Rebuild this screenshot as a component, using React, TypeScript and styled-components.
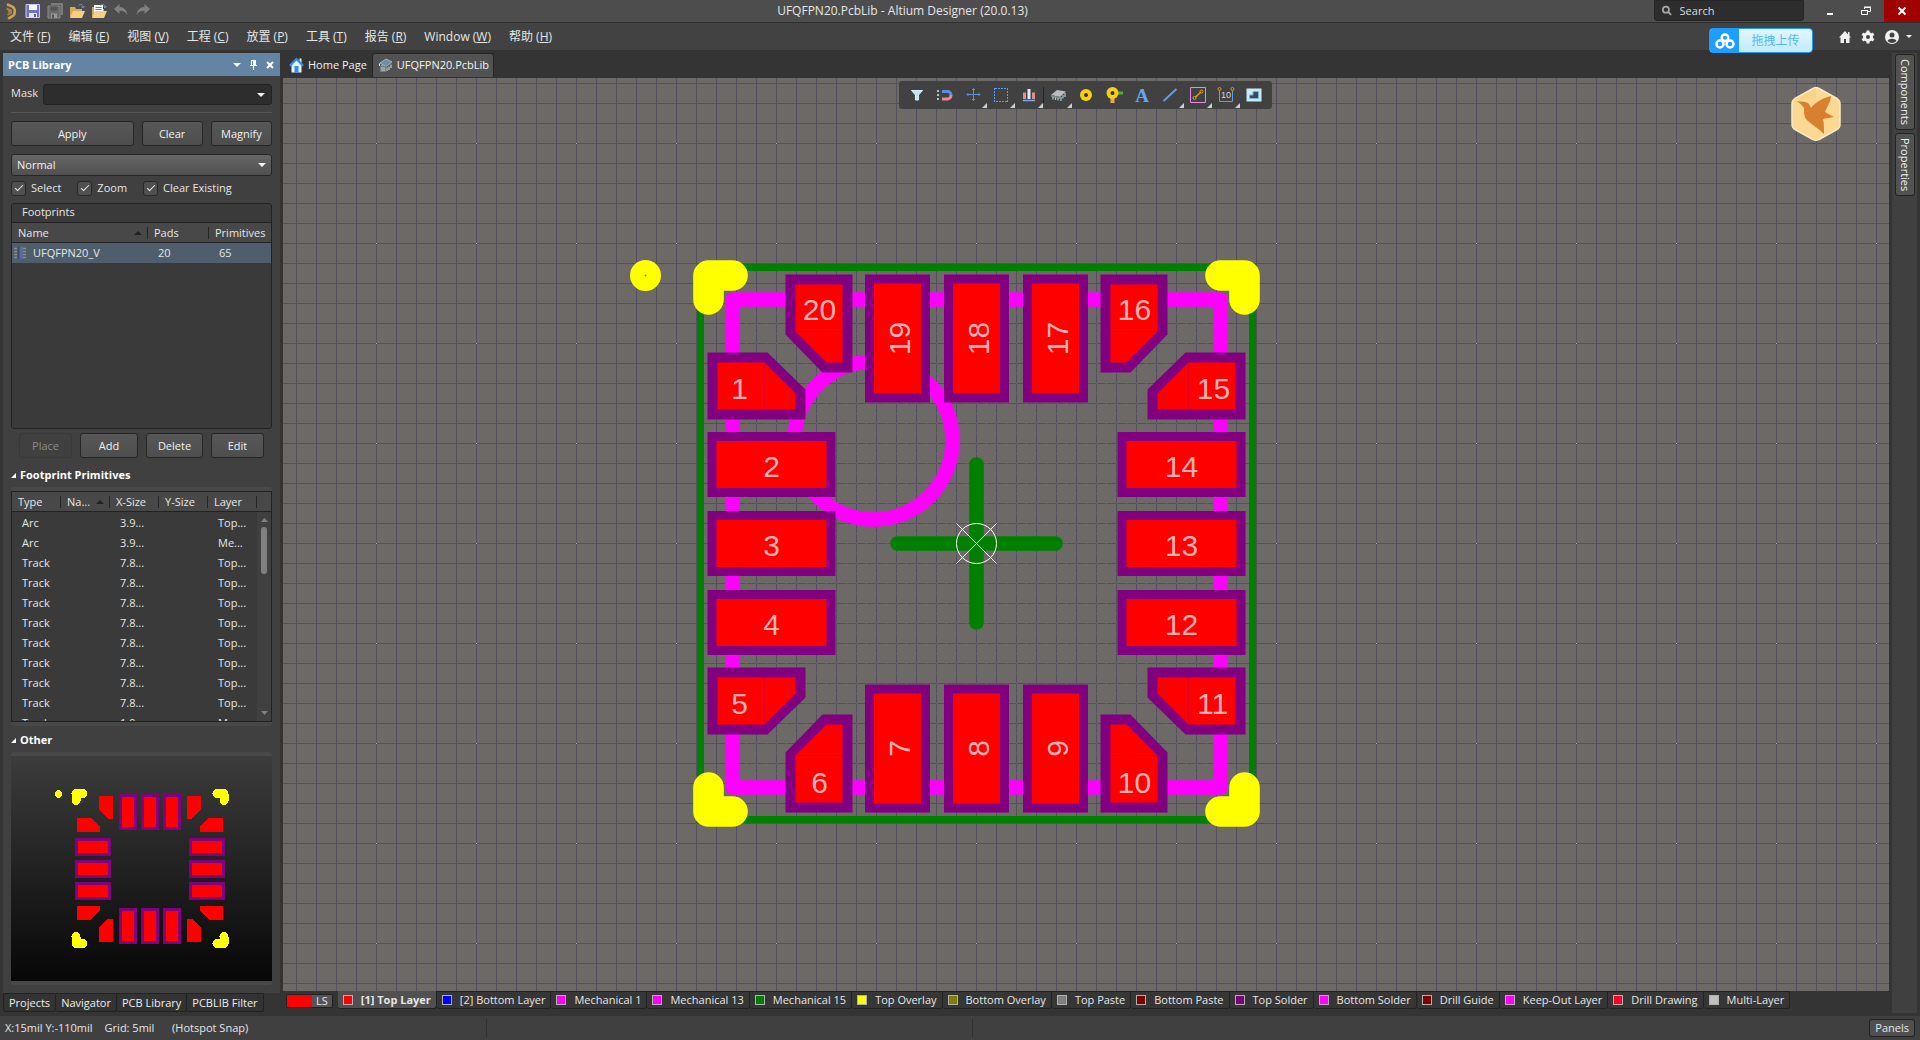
import React from "react";
import styled, { createGlobalStyle, css } from "styled-components";

const font = '"Open Sans", "Noto Sans", "Noto Sans CJK SC", sans-serif';

const GlobalStyle = createGlobalStyle`
  *, *::before, *::after { box-sizing: border-box; }
  body { margin: 0; background: #343434; overflow: hidden; }
  button, input, select { font: inherit; color: inherit; margin: 0; }
`;

const Shell = styled.div`
  display: flex;
  flex-direction: column;
  height: 100vh;
  background: #343434;
  color: #e6e6e6;
  font: 11px/16px ${font};
  white-space: nowrap;
`;

/* ---------- title bar ---------- */
const TitleBar = styled.header`
  display: grid;
  grid-template-columns: auto 1fr auto;
  height: 23px;
  background: #4d4d4d;
  border-bottom: 1px solid #2e2e2e;
`;
const QuickTools = styled.div`
  display: flex;
  align-items: center;
  gap: 6px;
  padding-left: 3px;
`;
const BareButton = styled.button`
  display: flex;
  align-items: center;
  justify-content: center;
  padding: 0;
  border: 0;
  background: none;
  color: #f2f2f2;
`;
const Title = styled.h1`
  margin: 0;
  font-size: 12px;
  line-height: 22px;
  font-weight: 400;
  text-align: center;
`;
const WindowTools = styled.div`
  display: flex;
  justify-content: flex-end;
`;
const SearchBox = styled.label`
  display: flex;
  align-items: center;
  gap: 8px;
  width: 150px;
  height: 21px;
  margin-right: 8px;
  padding: 0 7px;
  background: #2d2d2d;
  border: 1px solid #262626;
  border-radius: 0 0 3px 3px;
`;
const SearchInput = styled.input`
  width: 100%;
  padding: 0;
  border: 0;
  outline: 0;
  background: none;
  &::placeholder { color: #dcdcdc; opacity: 1; }
`;
const WindowButton = styled(BareButton)<{ $close?: boolean }>`
  width: 36px;
  height: 22px;
  background: ${(p) => (p.$close ? "#a00000" : "none")};
`;

/* ---------- menu ---------- */
const MenuBar = styled.nav`
  display: flex;
  justify-content: space-between;
  height: 27px;
  background: #424242;
  padding-left: 1px;
`;
const MenuGroup = styled.div`
  display: flex;
`;
const MenuItem = styled.button`
  padding: 0 9px;
  border: 0;
  background: none;
  font-size: 12px;
`;
const UserTools = styled.div`
  display: flex;
  align-items: center;
  gap: 10px;
  padding-right: 8px;
`;
const AccountButton = styled(BareButton)`
  gap: 7px;
`;

/* ---------- workspace ---------- */
const Workspace = styled.main`
  flex: 1;
  min-height: 0;
  display: grid;
  grid-template-columns: 280px minmax(0, 1fr) 31px;
`;
const LeftColumn = styled.aside`
  display: flex;
  flex-direction: column;
  min-height: 0;
  padding: 3px 0 4px 3px;
`;
const Panel = styled.section`
  flex: 1;
  min-height: 0;
  display: flex;
  flex-direction: column;
  background: #404040;
`;
const PanelHeader = styled.div`
  display: flex;
  align-items: center;
  gap: 8px;
  height: 23px;
  padding: 0 6px 0 5px;
  background: #6484a3;
  color: #fff;
`;
const PanelTitle = styled.h2`
  flex: 1;
  margin: 0;
  font-size: 11px;
  font-weight: 700;
`;
const PanelBody = styled.div`
  flex: 1;
  min-height: 0;
  display: flex;
  flex-direction: column;
  padding: 8px;
`;
const MaskRow = styled.div`
  display: flex;
  gap: 5px;
  padding-bottom: 7px;
  border-bottom: 1px solid #565656;
  label { line-height: 18px; }
`;
const Combo = styled.div`
  flex: 1;
  display: flex;
  height: 21px;
  padding-right: 6px;
  background: #2d2d2d;
  border: 1px solid #222;
  border-radius: 3px;
`;
const ComboInput = styled.input`
  flex: 1;
  min-width: 0;
  padding: 0 4px;
  border: 0;
  outline: 0;
  background: none;
`;
const ButtonRow = styled.div<{ $cols: string; $inset?: boolean }>`
  display: grid;
  grid-template-columns: ${(p) => p.$cols};
  gap: 8px;
  padding: ${(p) => (p.$inset ? "4px 8px 3px" : "8px 0 0")};
`;
const PushButton = styled.button`
  display: flex;
  justify-content: safe center;
  align-items: center;
  height: 25px;
  padding: 0 9px;
  background: linear-gradient(#575757, #4e4e4e);
  border: 1px solid #262626;
  border-radius: 3px;
  color: #f0f0f0;
  span { overflow: hidden; }
  &:disabled {
    background: none;
    border-color: #393939;
    color: #8a8a8a;
  }
`;
const SelectWrap = styled.div`
  display: grid;
  align-items: center;
  margin-top: 8px;
  > * { grid-area: 1 / 1; }
  > svg { justify-self: end; margin-right: 6px; pointer-events: none; }
`;
const Select = styled.select`
  appearance: none;
  width: 100%;
  height: 22px;
  padding: 0 5px;
  background: linear-gradient(#666, #505050);
  border: 1px solid #262626;
  border-radius: 3px;
  color: #f0f0f0;
`;
const Checks = styled.div`
  display: flex;
  gap: 16px;
  padding: 4px 0 7px;
`;
const Check = styled.label`
  display: flex;
  align-items: center;
  gap: 5px;
`;
const CheckBox = styled.input`
  appearance: none;
  display: grid;
  place-items: center;
  width: 15px;
  height: 15px;
  background: #505050;
  border: 1px solid #282828;
  border-radius: 3px;
  &:checked::after {
    content: "";
    width: 8px;
    height: 4px;
    border: solid #f0f0f0;
    border-width: 0 0 1px 1px;
    transform: translateY(-1px) rotate(-45deg);
  }
`;
const ListBox = styled.div`
  height: 226px;
  background: #3a3a3a;
  border: 1px solid #222;
  border-radius: 3px;
  overflow: hidden;
`;
const ListTitle = styled.div`
  height: 19px;
  padding: 0 10px;
  border-bottom: 1px solid #222;
`;
const Table = styled.table`
  width: 100%;
  table-layout: fixed;
  border-collapse: separate;
  border-spacing: 0;
`;
const HeadCell = styled.th<{ $w?: number }>`
  position: relative;
  width: ${(p) => (p.$w ? `${p.$w}px` : "auto")};
  height: 20px;
  padding: 0 0 0 6px;
  background: #484848;
  border-bottom: 1px solid #222;
  font-weight: 400;
  text-align: left;
  &:not(:last-child)::after {
    content: "";
    position: absolute;
    right: 0;
    top: 4px;
    bottom: 3px;
    width: 1px;
    background: #262626;
  }
`;
const SortMark = styled.svg`
  position: absolute;
  right: 6px;
  top: 8px;
`;
const Cell = styled.td<{ $selected?: boolean; $pad?: number }>`
  height: 20px;
  padding: 0 0 0 ${(p) => p.$pad ?? 10}px;
  background: ${(p) => (p.$selected ? "#4f5d6c" : "transparent")};
`;
const NameCell = styled.div`
  display: flex;
  align-items: center;
  gap: 7px;
`;
const SectionTitle = styled.h3`
  display: flex;
  align-items: center;
  gap: 4px;
  margin: 0;
  padding: 6px 0 4px;
  font-size: 11px;
  font-weight: 700;
  color: #fff;
`;
const Frame = styled.div<{ $grow?: boolean }>`
  display: flex;
  flex-direction: column;
  border: solid #484848;
  border-width: 4px 0;
  border-radius: 3px;
  ${(p) => (p.$grow ? css`flex: 1; min-height: 0;` : "")}
`;
const PrimitiveBox = styled.div`
  height: 231px;
  border: 1px solid #222;
  background: #3a3a3a;
  overflow: hidden;
`;
const PrimitiveHead = styled.div`
  height: 20px;
`;
const PrimitiveBody = styled.div`
  display: grid;
  grid-template-columns: 1fr 14px;
  height: 209px;
  overflow: hidden;
`;
const RowsClip = styled.div`
  overflow: hidden;
  padding-top: 1px;
`;
const ScrollTrack = styled.div`
  display: flex;
  flex-direction: column;
  align-items: center;
  padding: 6px 0;
  background: #404040;
`;
const ScrollThumb = styled.div`
  width: 6px;
  height: 47px;
  margin: 5px 0 auto;
  border-radius: 3px;
  background: #808080;
`;
const PreviewArea = styled.div`
  flex: 1;
  min-height: 0;
  background: linear-gradient(#3c3c3c, #070707);
  svg { display: block; width: 100%; height: 100%; }
`;
const PanelTabs = styled.div`
  display: flex;
  height: 19px;
`;
const PanelTab = styled.button`
  padding: 0 5px;
  background: #333;
  border: 1px solid #222;
  border-left-width: 0;
  border-radius: 0 0 3px 3px;
  color: #eee;
  &:first-child { border-left-width: 1px; }
`;

/* ---------- editor ---------- */
const Editor = styled.section`
  display: flex;
  flex-direction: column;
  min-height: 0;
  padding-left: 3px;
`;
const DocTabs = styled.div`
  display: flex;
  align-items: flex-end;
  height: 28px;
  padding: 0 0 1px;
`;
const DocTab = styled.button<{ $active?: boolean }>`
  display: flex;
  align-items: center;
  gap: 4px;
  height: 24px;
  padding: 0 4px 1px 5px;
  background: ${(p) => (p.$active ? "#525252" : "none")};
  border: 1px solid ${(p) => (p.$active ? "#252525" : "transparent")};
  border-bottom: 0;
  border-radius: 3px 3px 0 0;
  color: #f2f2f2;
`;
const Canvas = styled.div`
  position: relative;
  flex: 1;
  min-height: 0;
  background: #6c6967;
  overflow: hidden;
  > svg { display: block; width: 100%; height: 100%; }
`;
const ActiveBar = styled.div`
  position: absolute;
  left: 50%;
  top: 3px;
  display: flex;
  align-items: center;
  height: 28px;
  margin-left: -187px;
  padding: 0 4px;
  background: #414141;
  border-radius: 3px;
`;
const BarButton = styled(BareButton)<{ $menu?: boolean }>`
  position: relative;
  width: 28px;
  height: 28px;
  ${(p) =>
    p.$menu
      ? css`
          &::after {
            content: "";
            position: absolute;
            right: 0;
            bottom: 1px;
            width: 5px;
            height: 5px;
            background: #d0d0d0;
            clip-path: polygon(100% 0, 100% 100%, 0 100%);
          }
        `
      : ""}
`;
const BarRule = styled.span`
  width: 1px;
  height: 16px;
  background: #222;
`;
const Badge = styled(BareButton)`
  position: absolute;
  right: 47px;
  top: 8px;
`;
const UploadButton = styled.button`
  position: absolute;
  right: 107px;
  top: 28px;
  z-index: 2;
  display: flex;
  width: 104px;
  height: 25px;
  padding: 0;
  border: 1px solid #1d9bff;
  border-radius: 4px;
  background: linear-gradient(#e4f6ff, #c2eaff);
  overflow: hidden;
  color: #52b8fa;
  font-size: 12px;
`;
const UploadMark = styled.span`
  display: grid;
  place-items: center;
  width: 29px;
  height: 100%;
  background: #1e9fff;
`;
const UploadText = styled.span`
  flex: 1;
  line-height: 24px;
`;
const LayerBar = styled.div`
  display: flex;
  align-items: flex-start;
  height: 25px;
  padding-left: 3px;
`;
const LayerSet = styled.button`
  display: flex;
  align-items: stretch;
  height: 14px;
  margin: 3px 5px 0 0;
  padding: 0;
  border: 1px solid #222;
  border-radius: 2px;
  background: #555;
  line-height: 12px;
`;
const LayerSetColor = styled.span`
  width: 25px;
  margin-right: 4px;
  background: #f00;
`;
const LayerSetText = styled.span`
  padding-right: 4px;
`;
const LayerTab = styled.button<{ $active?: boolean }>`
  display: flex;
  align-items: center;
  gap: 8px;
  height: 18px;
  padding: 0 5px;
  background: ${(p) => (p.$active ? "#505050" : "#363636")};
  border: 1px solid #222;
  border-left-width: 0;
  border-top-width: ${(p) => (p.$active ? 0 : 1)}px;
  border-radius: 0 0 3px 3px;
  font-weight: ${(p) => (p.$active ? 700 : 400)};
`;
const Swatch = styled.span<{ $color: string }>`
  width: 10px;
  height: 10px;
  border: 1px solid #b0b0b0;
  background: ${(p) => p.$color};
`;
const RightRail = styled.aside`
  display: flex;
  flex-direction: column;
  gap: 3px;
  margin: 3px;
  padding: 1px 2px 0 3px;
  background: #404040;
`;
const RailTab = styled.button`
  width: 20px;
  padding: 4px 0;
  writing-mode: vertical-rl;
  line-height: 18px;
  background: #525252;
  border: 1px solid #222;
  border-radius: 3px;
  color: #f0f0f0;
`;

/* ---------- status bar ---------- */
const StatusBar = styled.footer`
  display: grid;
  grid-template-columns: 486px 486px 1fr;
  align-items: center;
  height: 24px;
  background: #404040;
`;
const StatusCell = styled.div`
  display: flex;
  align-items: center;
  justify-content: flex-start;
  gap: 12px;
  height: 18px;
  padding: 0 5px;
  & + & { border-left: 1px solid #303030; }
  &:last-child { justify-content: flex-end; }
`;
const PanelsButton = styled.button`
  height: 18px;
  padding: 0 5px;
  line-height: 14px;
  background: #505050;
  border: 1px solid #222;
  border-radius: 3px;
`;

/* ---------- icons ---------- */
const Caret = ({ w = 8 }: { w?: number }) => (
  <svg width={w} height={w / 2} viewBox="0 0 8 4">
    <path d="M0 0h8L4 4z" fill="#f4f4f4" />
  </svg>
);
const Fold = () => (
  <svg width="5" height="5" viewBox="0 0 5 5">
    <path d="M5 0v5H0z" fill="#fff" />
  </svg>
);
const Logo = () => (
  <svg width="16" height="18" viewBox="-1 0 16 18">
    <path d="M3 2.200 8 4.500c3.500 1.700 4 7.500 0 10L4 16.600" fill="none" stroke="#c9a04e" strokeWidth="2.600" />
    <path d="M2.500 6.500 7 8.500v2.500L3.500 13M7 8.500 4 10" fill="none" stroke="#a98238" strokeWidth="2" />
  </svg>
);
const Disk = ({ gray }: { gray?: boolean }) => {
  const edge = gray ? "#8b8b8b" : "#c9c9f2";
  const fill = gray ? "#6a6a6a" : "#7272c4";
  return (
    <svg width="16" height="16" viewBox="0 0 16 16">
      {gray && <path d="M4 1h11v11" fill="none" stroke="#8b8b8b" strokeWidth="1.500" />}
      <path d={gray ? "M1 3h12v12H1z" : "M1 1.500h13.500v13H1z"} fill={fill} stroke={edge} />
      <path d={gray ? "M3.500 3.500h7v4h-7z" : "M4 2h8v5H4z"} fill={gray ? "#555" : "#f6f6ff"} />
      <path d={gray ? "M4 10.500h6V15H4z" : "M4 10h8v4.500H4z"} fill={gray ? "#999" : "#e6e6f8"} />
      <path d={gray ? "M5 11.500h2V15H5z" : "M9 11h2v3H9z"} fill={gray ? "#555" : "#5858a8"} />
    </svg>
  );
};
const Folder = ({ page }: { page?: boolean }) => (
  <svg width="16" height="16" viewBox="0 0 16 16">
    <path d="M1 14V4h5l1 2h6v3" fill="#d9a955" />
    {page && (
      <g>
        <path d="M3 2h9v9H3z" fill="#fff" />
        <path d="M4.500 4.500h6M4.500 6.500h6" stroke="#777" />
      </g>
    )}
    <path d="M1 15 4 8h12l-3 7z" fill="#f5cf86" />
    <path d="M9.500 2.500c2-2 4-1.500 4.500 1.500M12.500 3.500 14 5l1.500-2" fill="none" stroke="#6f97c0" />
  </svg>
);
const Undo = ({ redo }: { redo?: boolean }) => (
  <svg width="16" height="14" viewBox="0 0 16 14">
    <path
      transform={redo ? "matrix(-1 0 0 1 16 0)" : undefined}
      d="M6.500 0 1 5l5.500 5V6.700c3.500-.2 6 .8 8 4.300-.7-5-3.500-7.700-8-7.900z"
      fill="#808080"
    />
  </svg>
);
const HouseColor = () => (
  <svg width="15" height="16" viewBox="0 0 15 16">
    <path d="M10.500 1.500h2v4h-2z" fill="#d8ecff" />
    <path d="M2.500 8v7.500h10V8L7.500 3z" fill="#e4f3ff" />
    <path d="M.8 8.800 7.500 2l6.700 6.800" fill="none" stroke="#2f8ff0" strokeWidth="2" />
    <path d="M5.500 9h4v6.500h-4z" fill="#2f8ff0" />
  </svg>
);
const ChipDoc = () => (
  <svg width="15" height="15" viewBox="0 0 15 15">
    <path d="m2 5 6-4 6 3-6 4.500z" fill="#6f8ca0" stroke="#9fb6c6" />
    <path d="M9 9.500V13M11 8.500V12M13 6.500V10" stroke="#dde6ee" fill="none" />
    <path d="M1.500 5.500V8M4 7v2" stroke="#dde6ee" fill="none" />
    <path d="M2.500 8.500h5v5h-5z" fill="#9aa2aa" stroke="#777f86" />
  </svg>
);
const ChipRow = () => (
  <svg width="12" height="14" viewBox="0 0 12 14">
    <path d="M0 2.500h12M0 5.500h12M0 8.500h12M0 11.500h12" stroke="#8d8d83" strokeWidth="1.500" />
    <path d="M3 1h6v12H3z" fill="#5a6c9c" />
    <path d="M3.500 1h2v12h-2z" fill="#3a466b" />
  </svg>
);

const activeTools: { name: string; menu?: boolean; ruleAfter?: boolean; art: React.ReactNode }[] = [
  {
    name: "Filter",
    art: (
      <path d="M3.500 4.500h11L10.500 9v5h-3V9z" fill="#bfe3f3" stroke="#d9f1fb" strokeWidth="1" />
    ),
  },
  {
    name: "Snap",
    art: (
      <g fill="none">
        <path d="M6 5.500h5.500c2 0 3.500 1.500 3.500 3.500" stroke="#5f8be0" strokeWidth="3" />
        <path d="M6 13h5.500c2 0 3.500-2 3.500-4" stroke="#e88a8a" strokeWidth="3" />
        <path d="M1 5h3M1 9h3M1 13h3" stroke="#a8c6d0" strokeWidth="2" strokeDasharray="2 1" />
      </g>
    ),
  },
  {
    name: "Move",
    menu: true,
    art: <path d="M9.500 2.500v12M3 8.500h13M8 4l1.500-1.500L11 4M8 13l1.500 1.500L11 13M4.500 7 3 8.500 4.500 10M14.500 7 16 8.500 14.500 10" stroke="#5f8be0" fill="none" />,
  },
  {
    name: "Select area",
    menu: true,
    art: <path d="M2.500 2.500h13v13h-13z" stroke="#5f9bf0" fill="none" strokeDasharray="2 1" shapeRendering="crispEdges" />,
  },
  {
    name: "Align",
    menu: true,
    ruleAfter: true,
    art: (
      <g>
        <path d="M3 6.500h3V13H3zM12 6.500h3V13h-3z" fill="#e88a8a" />
        <path d="M7.500 3h3v10h-3z" fill="#d4f0fa" />
        <path d="M3 14.500h12" stroke="#6ea8f0" strokeWidth="1.500" />
      </g>
    ),
  },
  {
    name: "Component",
    menu: true,
    art: (
      <g>
        <path d="m2 9 6-5 9 1.500-6 5.500z" fill="#b8bcc0" />
        <path d="m2 9 9 2v2l-9-2z" fill="#83888c" />
        <path d="M4 11v2.500M6.500 11.500V14M9 12v2.500M12 11v4M14 9v3.500M16 7v4" stroke="#a6cfd8" strokeWidth="1.200" />
      </g>
    ),
  },
  {
    name: "Pad",
    art: (
      <g>
        <circle cx="9" cy="9" r="6" fill="#f7cf12" />
        <circle cx="9" cy="9" r="2" fill="#3a3300" />
      </g>
    ),
  },
  {
    name: "Via",
    art: (
      <g>
        <path d="M7.500 7v10" stroke="#e8a65e" strokeWidth="4" />
        <path d="M11 7h7" stroke="#4fae3b" strokeWidth="3" />
        <circle cx="7.500" cy="7" r="6" fill="#f7cf12" />
        <circle cx="7.500" cy="7" r="2" fill="#3a3300" />
      </g>
    ),
  },
  {
    name: "String",
    art: (
      <text x="9" y="15.500" textAnchor="middle" fontFamily="Liberation Serif, serif" fontWeight="700" fontSize="19" fill="#62a8f5">
        A
      </text>
    ),
  },
  { name: "Line", menu: true, art: <path d="M2.500 15 15.500 3" stroke="#5b9df0" strokeWidth="2" /> },
  {
    name: "Measure",
    menu: true,
    art: (
      <g fill="none">
        <path d="M1.500 1.500h15v15h-15z" stroke="#e08fe0" />
        <path d="M6 11.500 12 6" stroke="#d99b28" strokeWidth="1.500" />
        <circle cx="5.500" cy="12" r="1.500" stroke="#d99b28" />
        <circle cx="12.500" cy="5.500" r="1.500" stroke="#d99b28" />
      </g>
    ),
  },
  {
    name: "Dimension",
    menu: true,
    art: (
      <g fill="none">
        <path d="M2.500 5v10.500h13V5" stroke="#5b9df0" />
        <circle cx="2.500" cy="3" r="1.500" stroke="#d99b28" />
        <circle cx="15.500" cy="3" r="1.500" stroke="#d99b28" />
        <text x="9" y="12" textAnchor="middle" fontFamily="Liberation Sans, sans-serif" fontSize="9" fill="#d8d8d8">
          10
        </text>
      </g>
    ),
  },
  {
    name: "Region",
    art: (
      <g>
        <path d="M1.500 2.500h15v13h-15z" fill="#c8eaf8" />
        <path d="M8 5.500h5.500v7h-9V9H8z" fill="#3a4a58" stroke="#7ab4d8" />
      </g>
    ),
  },
];

/* ---------- footprint drawing ---------- */
const PITCH = 79;
const mirrors = [
  { sx: 1, sy: 1 },
  { sx: -1, sy: 1 },
  { sx: 1, sy: -1 },
  { sx: -1, sy: -1 },
];

const straightPads = [
  ...[2, 3, 4].map((n, i) => ({ n, x: -205, y: (i - 1) * PITCH, tall: false })),
  ...[14, 13, 12].map((n, i) => ({ n, x: 205, y: (i - 1) * PITCH, tall: false })),
  ...[19, 18, 17].map((n, i) => ({ n, x: (i - 1) * PITCH, y: -205, tall: true })),
  ...[7, 8, 9].map((n, i) => ({ n, x: (i - 1) * PITCH, y: 205, tall: true })),
];

const cornerLabels = [
  { n: 1, x: -237, y: -156 },
  { n: 20, x: -157, y: -235 },
  { n: 16, x: 158, y: -235 },
  { n: 15, x: 237, y: -156 },
  { n: 5, x: -237, y: 159 },
  { n: 6, x: -157, y: 238 },
  { n: 11, x: 236, y: 159 },
  { n: 10, x: 158, y: 238 },
];

const PadText = styled.text`
  font: 30px "Liberation Sans", sans-serif;
  fill: #ffb2b2;
  text-anchor: middle;
`;

const HATCH = 10;
const hatchSteps = Array.from({ length: HATCH }, (_, i) => `M${i} ${i}h1v1h-1z`).join("");

const Footprint = () => (
  <g>
    <rect x="-276" y="-276" width="552" height="552" fill="none" stroke="#008000" strokeWidth="7" />
    <rect x="-244" y="-244" width="488" height="488" fill="url(#hatch)" stroke="#f0f" strokeWidth="14.600" strokeLinejoin="round" />
    <circle cx="-103" cy="-103" r="79" fill="none" stroke="#f0f" strokeWidth="14.600" />
    {mirrors.map(({ sx, sy }) => (
      <g key={`${sx}${sy}`} transform={`scale(${sx} ${sy})`}>
        <path d="M-269-191h60l38 37v30h-98z" fill="#800080" />
        <path d="M-259-181h47l31 31v16h-78z" fill="#f00" />
        <path d="M-212-181v47" stroke="#800080" strokeOpacity=".25" />
        <path d="M-191-269v60l37 38h30v-98z" fill="#800080" />
        <path d="M-181-259v47l31 31h16v-78z" fill="#f00" />
        <path d="M-181-212h47" stroke="#800080" strokeOpacity=".25" />
        <path d="M-268-244v-24h24" fill="none" stroke="#ff0" strokeWidth="30.600" strokeLinecap="round" strokeLinejoin="round" />
      </g>
    ))}
    {straightPads.map(({ n, x, y, tall }) => (
      <g key={n} transform={`translate(${x} ${y})${tall ? " rotate(-90)" : ""}`}>
        <rect x="-64" y="-32.500" width="128" height="65" fill="#800080" />
        <rect x="-55" y="-23.500" width="110" height="47" fill="#f00" />
        <PadText x="0" y="12">{n}</PadText>
      </g>
    ))}
    {cornerLabels.map(({ n, x, y }) => (
      <PadText key={n} x={x} y={y + 11}>{n}</PadText>
    ))}
    <circle cx="-331" cy="-268" r="15.500" fill="#ff0" />
    <circle cx="-331" cy="-268" r="1" fill="#808000" />
    <path d="M-79 0H79M0-79V79" stroke="#008000" strokeWidth="14.600" strokeLinecap="round" />
    <circle r="20" fill="none" stroke="#fff" />
    <path d="m-20-20 40 40M20-20l-40 40" stroke="#fff" />
  </g>
);

const BoardView = () => (
  <svg role="img" aria-label="UFQFPN20 footprint">
    <defs>
      <pattern id="grid" x="13" y="5" width="20" height="20" patternUnits="userSpaceOnUse">
        <path d="M0 0h1v20H0zM0 0h20v1H0z" fill="#53505f" />
      </pattern>
      <pattern id="dots" x="93" y="65" width="100" height="100" patternUnits="userSpaceOnUse">
        <path d="M0 0h1v1H0z" fill="#b8b8b8" />
      </pattern>
      <pattern id="hatch" width={HATCH} height={HATCH} patternUnits="userSpaceOnUse" patternTransform="translate(.5 .5)">
        <path d={hatchSteps} fill="#f0f" shapeRendering="crispEdges" />
      </pattern>
    </defs>
    <rect width="100%" height="100%" fill="url(#grid)" />
    <rect width="100%" height="100%" fill="url(#dots)" />
    <g transform="translate(693.500 465.500)">
      <Footprint />
    </g>
  </svg>
);

const FootprintPreview = () => (
  <svg viewBox="-139 -112 261 224" role="img" aria-label="Footprint preview" shapeRendering="crispEdges">
    {mirrors.map(({ sx, sy }) => (
      <g key={`${sx}${sy}`} transform={`scale(${sx} ${sy})`}>
        <path d="M-73-51h14l9 9v5h-23z" fill="#f00" />
        <path d="M-51-73v14l9 9h5v-23z" fill="#f00" />
        <path d="M-74-68v-7h7" fill="none" stroke="#ff0" strokeWidth="9" strokeLinecap="round" strokeLinejoin="round" />
      </g>
    ))}
    {[-22, 0, 22].map((d) => (
      <g key={d} fill="#f00" stroke="#800080" strokeWidth="3">
        <rect x="-73.500" y={d - 7.5} width="33" height="15" />
        <rect x="40.500" y={d - 7.5} width="33" height="15" />
        <rect x={d - 7.5} y="-73.500" width="15" height="33" />
        <rect x={d - 7.5} y="40.500" width="15" height="33" />
      </g>
    ))}
    <circle cx="-91.500" cy="-74.500" r="3.700" fill="#ff0" />
  </svg>
);

/* ---------- data ---------- */
const menus = [
  ["文件", "F"], ["编辑", "E"], ["视图", "V"], ["工程", "C"], ["放置", "P"],
  ["工具", "T"], ["报告", "R"], ["Window", "W"], ["帮助", "H"],
];
const primitives = [
  ["Arc", "3.9...", "Top..."],
  ["Arc", "3.9...", "Me..."],
  ...Array.from({ length: 8 }, () => ["Track", "7.8...", "Top..."]),
  ["Track", "1.9...", "Me..."],
];
const layers = [
  ["[1] Top Layer", "#f00"], ["[2] Bottom Layer", "#00f"], ["Mechanical 1", "#f0f"],
  ["Mechanical 13", "#f0f"], ["Mechanical 15", "#008000"], ["Top Overlay", "#ff0"],
  ["Bottom Overlay", "#808000"], ["Top Paste", "#808080"], ["Bottom Paste", "#800000"],
  ["Top Solder", "#800080"], ["Bottom Solder", "#f0f"], ["Drill Guide", "#800000"],
  ["Keep-Out Layer", "#f0f"], ["Drill Drawing", "#ff002a"], ["Multi-Layer", "#c0c0c0"],
];

const Columns = () => (
  <colgroup>
    <col width="49" /><col width="49" /><col width="49" /><col width="49" /><col />
  </colgroup>
);
const SortUp = () => (
  <SortMark width="8" height="4"><path d="M0 4h8L4 0z" fill="#222" /></SortMark>
);

export default function App() {
  return (
    <Shell>
      <GlobalStyle />
      <TitleBar>
        <QuickTools>
          <Logo />
          <BareButton aria-label="Save"><Disk /></BareButton>
          <BareButton aria-label="Save all"><Disk gray /></BareButton>
          <BareButton aria-label="Open"><Folder /></BareButton>
          <BareButton aria-label="Open document"><Folder page /></BareButton>
          <BareButton aria-label="Undo"><Undo /></BareButton>
          <BareButton aria-label="Redo"><Undo redo /></BareButton>
        </QuickTools>
        <Title>UFQFPN20.PcbLib - Altium Designer (20.0.13)</Title>
        <WindowTools>
          <SearchBox>
            <svg width="11" height="11" viewBox="0 0 11 11">
              <circle cx="4.500" cy="4.500" r="3.500" fill="none" stroke="#a8a8a8" strokeWidth="2" />
              <path d="m7 7 3.500 3.500" stroke="#a8a8a8" strokeWidth="2" />
            </svg>
            <SearchInput aria-label="Search" placeholder="Search" />
          </SearchBox>
          <WindowButton aria-label="Minimize">
            <svg width="10" height="10"><path d="M2 7h6v2H2z" fill="#fff" /></svg>
          </WindowButton>
          <WindowButton aria-label="Restore">
            <svg width="10" height="10" fill="none" stroke="#fff">
              <path d="M3.500 3V1.500h6v4H7M3 1h7" /><path d="M.5 4.500h6v4h-6zM0 4.500h7" />
            </svg>
          </WindowButton>
          <WindowButton aria-label="Close" $close>
            <svg width="10" height="10"><path d="m1.500 1.500 7 7m0-7-7 7" stroke="#fff" strokeWidth="2" /></svg>
          </WindowButton>
        </WindowTools>
      </TitleBar>

      <MenuBar>
        <MenuGroup>
          {menus.map(([label, key]) => (
            <MenuItem key={key}>{label} (<u>{key}</u>)</MenuItem>
          ))}
        </MenuGroup>
        <UserTools>
          <BareButton aria-label="Home">
            <svg width="12" height="12"><path d="M6 0 0 6.500h1.500V12H5V8h2v4h3.500V6.500H12L10.500 5V1H9v2.500z" fill="#f2f2f2" /></svg>
          </BareButton>
          <BareButton aria-label="Settings">
            <svg width="14" height="14" viewBox="-7 -7 14 14">
              <circle r="3.500" fill="none" stroke="#f2f2f2" strokeWidth="3" />
              <path d="M0-6.500V-4M0 4v2.500M-5.600-3.200l2 1.200M3.600 2l2 1.200M-5.600 3.200l2-1.200M3.600-2l2-1.200" stroke="#f2f2f2" strokeWidth="3" />
            </svg>
          </BareButton>
          <AccountButton aria-label="Account">
            <svg width="14" height="14" viewBox="0 0 14 14">
              <circle cx="7" cy="7" r="7" fill="#f2f2f2" />
              <circle cx="7" cy="5" r="2.500" fill="#424242" />
              <path d="M2.500 11c1-3 8-3 9 0-2.500 2.500-6.500 2.500-9 0" fill="#424242" />
            </svg>
            <Caret w={6} />
          </AccountButton>
        </UserTools>
      </MenuBar>

      <Workspace>
        <LeftColumn>
          <Panel>
            <PanelHeader>
              <PanelTitle>PCB Library</PanelTitle>
              <BareButton aria-label="Panel menu"><Caret w={8} /></BareButton>
              <BareButton aria-label="Pin panel">
                <svg width="9" height="10"><path d="M2 0h5v5h1v1H5v4H4V6H1V5h1z" fill="#fff" /><path d="M3 1h1v4H3z" fill="#6484a3" /></svg>
              </BareButton>
              <BareButton aria-label="Close panel">
                <svg width="8" height="8"><path d="m1 1 6 6m0-6-6 6" stroke="#fff" strokeWidth="2" /></svg>
              </BareButton>
            </PanelHeader>
            <PanelBody>
              <MaskRow>
                <label htmlFor="mask">Mask</label>
                <Combo>
                  <ComboInput id="mask" />
                  <BareButton aria-label="Mask history"><Caret /></BareButton>
                </Combo>
              </MaskRow>
              <ButtonRow $cols="2fr 1fr 1fr">
                <PushButton><span>Apply</span></PushButton>
                <PushButton><span>Clear</span></PushButton>
                <PushButton><span>Magnify</span></PushButton>
              </ButtonRow>
              <SelectWrap>
                <Select aria-label="View mode"><option>Normal</option></Select>
                <Caret />
              </SelectWrap>
              <Checks>
                {["Select", "Zoom", "Clear Existing"].map((t) => (
                  <Check key={t}><CheckBox type="checkbox" defaultChecked />{t}</Check>
                ))}
              </Checks>
              <ListBox>
                <ListTitle>Footprints</ListTitle>
                <Table>
                  <thead>
                    <tr>
                      <HeadCell $w={136}>Name<SortUp /></HeadCell>
                      <HeadCell $w={61}>Pads</HeadCell>
                      <HeadCell>Primitives</HeadCell>
                    </tr>
                  </thead>
                  <tbody>
                    <tr>
                      <Cell $selected $pad={2}><NameCell><ChipRow />UFQFPN20_V</NameCell></Cell>
                      <Cell $selected>20</Cell>
                      <Cell $selected>65</Cell>
                    </tr>
                  </tbody>
                </Table>
              </ListBox>
              <ButtonRow $cols="53fr 58fr 57fr 53fr" $inset>
                <PushButton disabled><span>Place</span></PushButton>
                <PushButton><span>Add</span></PushButton>
                <PushButton><span>Delete</span></PushButton>
                <PushButton><span>Edit</span></PushButton>
              </ButtonRow>
              <SectionTitle><Fold />Footprint Primitives</SectionTitle>
              <Frame>
                <PrimitiveBox>
                  <PrimitiveHead>
                    <Table>
                      <thead>
                        <tr>
                          <HeadCell $w={49}>Type</HeadCell>
                          <HeadCell $w={49}>Na...<SortUp /></HeadCell>
                          <HeadCell $w={49}>X-Size</HeadCell>
                          <HeadCell $w={49}>Y-Size</HeadCell>
                          <HeadCell $w={49}>Layer</HeadCell>
                          <HeadCell aria-label="Scroll" />
                        </tr>
                      </thead>
                    </Table>
                  </PrimitiveHead>
                  <PrimitiveBody>
                    <RowsClip>
                      <Table>
                        <Columns />
                        <tbody>
                          {primitives.map(([type, size, layer], i) => (
                            <tr key={i}>
                              <Cell>{type}</Cell><Cell /><Cell>{size}</Cell><Cell /><Cell>{layer}</Cell>
                            </tr>
                          ))}
                        </tbody>
                      </Table>
                    </RowsClip>
                    <ScrollTrack>
                      <svg width="7" height="4"><path d="M0 4h7L3.500 0z" fill="#808080" /></svg>
                      <ScrollThumb />
                      <svg width="7" height="4"><path d="M0 0h7L3.500 4z" fill="#808080" /></svg>
                    </ScrollTrack>
                  </PrimitiveBody>
                </PrimitiveBox>
              </Frame>
              <SectionTitle><Fold />Other</SectionTitle>
              <Frame $grow>
                <PreviewArea><FootprintPreview /></PreviewArea>
              </Frame>
            </PanelBody>
          </Panel>
          <PanelTabs>
            {["Projects", "Navigator", "PCB Library", "PCBLIB Filter"].map((t) => (
              <PanelTab key={t}>{t}</PanelTab>
            ))}
          </PanelTabs>
        </LeftColumn>

        <Editor>
          <DocTabs>
            <DocTab><HouseColor />Home Page</DocTab>
            <DocTab $active><ChipDoc />UFQFPN20.PcbLib</DocTab>
          </DocTabs>
          <Canvas>
            <BoardView />
            <ActiveBar>
              {activeTools.map(({ name, menu, ruleAfter, art }) => (
                <React.Fragment key={name}>
                  <BarButton $menu={menu} aria-label={name}>
                    <svg width="18" height="18" viewBox="0 0 18 18">{art}</svg>
                  </BarButton>
                  {ruleAfter && <BarRule />}
                </React.Fragment>
              ))}
            </ActiveBar>
            <Badge aria-label="Hummingbird">
              <svg width="52" height="56" viewBox="-26 -28 52 56">
                <path d="M-3-25.500q3-2 6 0l18 10q3 2 3 5v21q0 3-3 5l-18 10q-3 2-6 0l-18-10q-3-2-3-5v-21q0-3 3-5z" fill="#fbd992" stroke="#fdeac4" strokeWidth="1.500" />
                <path d="M0-26v10l-22 2M-22 14l12-5M22 14 12 9" fill="#f7cd7e" opacity=".5" />
                <path d="M-20-13c5 1 11 0 13 3l2 4C0-13 8-16 15-18c0 5-4 11-6 16l9 5c-4 1-8 1-11 2 1 5 1 10 1 15C3 15-2 12-8 7c-4-3-4-8-4-13-2-3-4-5-8-7z" fill="#d8802f" />
              </svg>
            </Badge>
          </Canvas>
          <LayerBar>
            <LayerSet><LayerSetColor /><LayerSetText>LS</LayerSetText></LayerSet>
            {layers.map(([name, color], i) => (
              <LayerTab key={name} $active={i === 0}><Swatch $color={color} />{name}</LayerTab>
            ))}
          </LayerBar>
        </Editor>

        <RightRail>
          <RailTab>Components</RailTab>
          <RailTab>Properties</RailTab>
        </RightRail>
      </Workspace>

      <StatusBar>
        <StatusCell><span>X:15mil Y:-110mil</span><span>Grid: 5mil</span><span>&nbsp;&nbsp;(Hotspot Snap)</span></StatusCell>
        <StatusCell />
        <StatusCell><PanelsButton>Panels</PanelsButton></StatusCell>
      </StatusBar>

      <UploadButton>
        <UploadMark>
          <svg width="20" height="16" viewBox="0 0 20 16" fill="none" stroke="#fff" strokeWidth="2.500">
            <circle cx="10" cy="4.800" r="3.300" /><circle cx="5" cy="11" r="3.500" /><circle cx="15" cy="11" r="3.500" />
          </svg>
        </UploadMark>
        <UploadText>拖拽上传</UploadText>
      </UploadButton>
    </Shell>
  );
}
